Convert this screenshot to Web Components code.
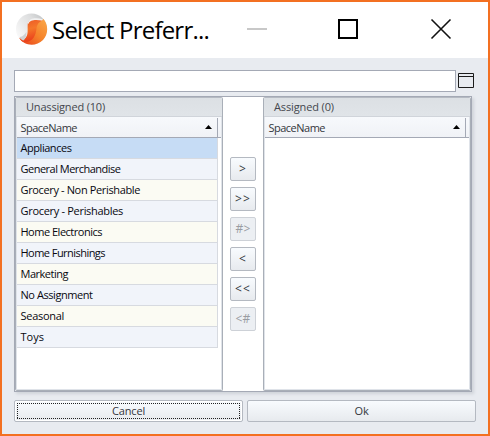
<!DOCTYPE html>
<html lang="en">
<head>
<meta charset="utf-8">
<title>Select Preferred</title>
<style>
body{margin:0;font:11px/14px "Open Sans","Noto Sans",sans-serif;color:#111;overflow:hidden}
</style>
</head>
<body>
<select-dialog></select-dialog>
<script>
const define = (name, html, setup) => customElements.define(name, class extends HTMLElement {
  connectedCallback() {
    if (this.shadowRoot) return;
    const t = document.createElement('template');
    t.innerHTML = typeof html === 'function' ? html(this) : html;
    this.attachShadow({mode: 'open'}).append(t.content.cloneNode(true));
    if (setup) setup(this);
  }
});

/* A label tracked so that its text fills the advance width given in "w". */
define('fit-label', el => `<style>:host{display:inline-block;white-space:pre;flex:none}</style><span>${el.getAttribute('text').replace(/</g, '&lt;')}</span>`, el => {
  const s = el.shadowRoot.querySelector('span');
  const w = s.getBoundingClientRect().width;
  s.style.letterSpacing = (el.getAttribute('w') - w) / s.textContent.length + 'px';
});

define('app-logo', `<style>:host{display:block;width:32px;height:34px}svg{display:block}</style>
<svg width="32" height="34" viewBox="0 0 32 34">
<defs>
<linearGradient id="g" x1="1" y1="0" x2="0" y2=".7"><stop offset="0" stop-color="#b9bcbe"/><stop offset=".4" stop-color="#dcddde"/><stop offset="1" stop-color="#fafafa"/></linearGradient>
<linearGradient id="o" x1="0" y1="1" x2="1" y2="0"><stop offset="0" stop-color="#e8391c"/><stop offset=".5" stop-color="#f5822a"/><stop offset="1" stop-color="#fba94a"/></linearGradient>
<linearGradient id="s" x1="0" y1="0" x2=".3" y2="1"><stop offset="0" stop-color="#ea5526"/><stop offset=".5" stop-color="#f5772a"/><stop offset="1" stop-color="#ea3f1c"/></linearGradient>
</defs>
<circle cx="15.500" cy="16" r="15.500" fill="url(#g)"/>
<path d="M27.500 6C32.500 12 32.500 21 27 27C20 34 8 33 3.300 25C9 28 12 24 14 20C17 13 22 9 27.500 6Z" fill="url(#o)"/>
<path d="M26.500 7.200C23 9 21 11 20.500 15C20 22 17 29 9 29C6 29 4 27 3.300 24.500C7 29 11 25 11.500 20C12 16 11 11 12.500 8.800C14 6.500 20 6.500 26.500 7.200Z" fill="url(#s)"/>
<path d="M11.800 10C13.500 4.500 21 4.500 27 6.500L26 7.500C20 6.500 13.500 6.500 12.500 11Z" fill="#f1f1f1"/>
<path d="M3.500 24C7 24 8.500 21 10.500 19C10.500 23 9.500 26 7.500 27.500C5.500 27 4.500 26 3.500 24Z" fill="#cfd1d3"/>
</svg>`);

define('title-bar', `<style>
:host{display:flex;box-sizing:border-box;height:56px;padding:11px 0 0 14px;background:#fff;color:#000;font:24px/34px "Open Sans","Noto Sans",sans-serif}
fit-label{margin:0 0 0 4px;height:34px}
svg{display:block;margin:4px 0 0 38px;height:26px}
</style><app-logo></app-logo><fit-label text="Select Preferr..." w="157"></fit-label>
<svg width="206" height="26" viewBox="0 0 206 26" fill="none">
<path d="M0 12h20" stroke="#c8c8c8" stroke-width="2"/>
<rect x="92" y="3" width="18" height="18" stroke="#000" stroke-width="2"/>
<path d="M184.500 2.500L203.500 21.500M203.500 2.500L184.500 21.500" stroke="#111" stroke-width="1.600"/>
</svg>`);

define('search-row', `<style>
:host{display:flex;gap:2px;height:22px}
.f{box-sizing:border-box;width:442px;height:22px;background:#fff;border:1px solid #a4a9b5}
svg{display:block;margin-top:3px}
</style><div class="f"></div><svg width="16" height="15" fill="none" stroke="#1c1c1c"><path d="M.5 .5h15v14H.5zM0 3.500h16"/></svg>`);

define('data-row', `<style>
:host{display:flex;box-sizing:border-box;width:201px;height:21px;padding:3px 0 0 3.5px;background:#f1f4fa;border-right:1px solid #d7dae0;border-bottom:1px solid #d7dae0;color:#080810}
:host([alt]){background:#fbfbf3}
:host([selected]){background:#c6dcf5}
</style><slot></slot>`);

define('list-group', el => `<style>
:host{display:flex;flex-direction:column;box-sizing:border-box;width:208px;height:294px;background:#fff;border:1px solid #a9afb8;border-top-color:#b5bac2;border-radius:2px;box-shadow:inset 0 0 0 1px #dfe3e9;padding:0 1px 1px;overflow:hidden}
.cap{box-sizing:border-box;height:19px;padding:2px 0 0 10px;color:#44474d;background:linear-gradient(#dce0e4,#e0e4e8);border-bottom:1px solid #d0d4da;margin:0 -1px}
.col{box-sizing:border-box;display:flex;height:21px;border-bottom:1px solid #a4a9b5;background:linear-gradient(#f7f9fc,#f0f2f6)}
.name{box-sizing:border-box;display:flex;justify-content:space-between;width:201px;border-right:1px solid #a4a9b5;padding:3px 5px 0 3.5px;color:#33363c;margin-top:1px}
svg{display:block;margin-top:4px}
</style>
<div class="cap"><fit-label text="${el.getAttribute('caption')}" w="${el.getAttribute('w')}"></fit-label></div>
<div class="col"><div class="name"><fit-label text="SpaceName" w="56.5"></fit-label><svg width="7" height="4"><path d="M0 4L3.500 0L7 4Z" fill="#000"/></svg></div></div>
<slot></slot>`);

define('push-button', `<style>
:host{display:flex;box-sizing:border-box;align-items:center;justify-content:center;width:26px;height:24px;border:1px solid #b4b9c1;border-radius:2px;background:linear-gradient(#f8fbfe,#e7eaee);color:#34373d;position:relative}
:host([wide]){width:229px;height:22px}
:host([disabled]){background:#eceff3;border-color:#cdd1d7;color:#999ca2}
:host([focused]){box-shadow:inset 0 0 0 1px #fff}
.ring{display:none}
:host([focused]) .ring{display:block;position:absolute;inset:2px;--d:#222 0 1px,transparent 1px 2px;background:repeating-linear-gradient(90deg,var(--d)) 0 0/100% 1px no-repeat,repeating-linear-gradient(90deg,var(--d)) 0 100%/100% 1px no-repeat,repeating-linear-gradient(var(--d)) 0 0/1px 100% no-repeat,repeating-linear-gradient(var(--d)) 100% 0/1px 100% no-repeat}
</style><slot></slot><div class="ring"></div>`);

define('select-dialog', () => {
  const rows = [['Appliances',51],['General Merchandise',100],['Grocery - Non Perishable',119.5],['Grocery - Perishables',102.5],['Home Electronics',81.5],['Home Furnishings',84.5],['Marketing',47.5],['No Assignment',72],['Seasonal',43.5],['Toys',23.5]];
  const moves = [['>',8,''],['>>',16,''],['#>',15,'disabled'],['<',8,''],['<<',16,''],['<#',15,'disabled']];
  return `<style>
:host{display:block;box-sizing:border-box;width:490px;height:436px;border:2px solid #f37021;background:#e8ebf0}
main{padding:12px 0 0 12px}
.panel{box-sizing:border-box;display:flex;justify-content:space-between;width:458px;height:296px;margin-top:4px;background:#fff;border:1px solid #a4a9b5;box-shadow:2px 2px 3px #cfd3d9}
.moves{display:flex;flex-direction:column;gap:6px;padding-top:60px}
.moves fit-label{font-size:12px}
.actions{display:flex;gap:4px;margin-top:8px}
</style>
<title-bar></title-bar>
<main><search-row></search-row>
<div class="panel">
<list-group caption="Unassigned (10)" w="79">${rows.map(([t, w], i) => `<data-row ${i === 0 ? 'selected' : i % 2 === 0 ? 'alt' : ''}><fit-label text="${t}" w="${w}"></fit-label></data-row>`).join('')}</list-group>
<div class="moves">${moves.map(([t, w, d]) => `<push-button ${d}><fit-label text="${t}" w="${w}"></fit-label></push-button>`).join('')}</div>
<list-group caption="Assigned (0)" w="60"></list-group>
</div>
<div class="actions"><push-button wide focused><fit-label text="Cancel" w="33"></fit-label></push-button><push-button wide><fit-label text="Ok" w="14"></fit-label></push-button></div>
</main>`;
});
</script>
</body>
</html>
